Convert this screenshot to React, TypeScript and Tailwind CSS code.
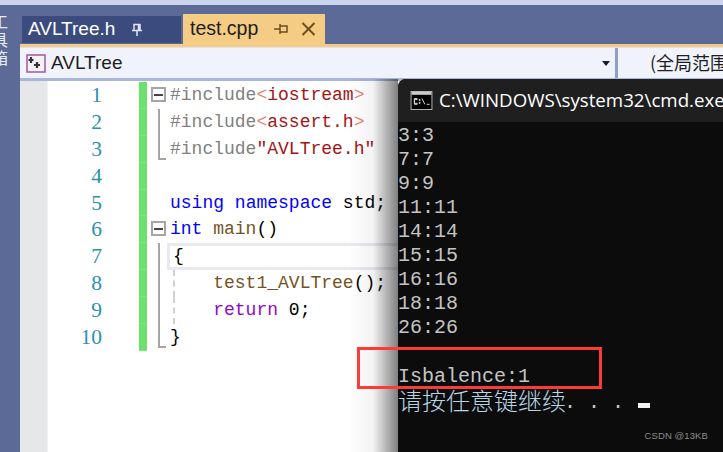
const mono = "font-['Liberation_Mono',monospace]";

type Seg = [string, string];
type Row = { n: number; fold?: 'box' | 'line' | 'foot'; cur?: boolean; guide?: boolean; segs: Seg[] };

const inc = 'text-[#808080]';
const str = 'text-[#a31515]';
const kw = 'text-[#0000ff]';
const fn = 'text-[#74531f]';
const ctl = 'text-[#8f08c4]';
const blk = 'text-black';

const rows: Row[] = [
  { n: 1, fold: 'box', segs: [[inc, '#include'], ['text-[#e8836f]', '<'], [str, 'iostream'], ['text-[#e8836f]', '>']] },
  { n: 2, fold: 'line', segs: [[inc, '#include'], ['text-[#e8836f]', '<'], [str, 'assert.h'], ['text-[#e8836f]', '>']] },
  { n: 3, fold: 'foot', segs: [[inc, '#include'], [str, '"AVLTree.h"']] },
  { n: 4, segs: [] },
  { n: 5, segs: [[kw, 'using'], [blk, ' '], [kw, 'namespace'], [blk, ' std;']] },
  { n: 6, fold: 'box', segs: [[kw, 'int'], [blk, ' '], [fn, 'main'], [blk, '()']] },
  { n: 7, fold: 'line', cur: true, segs: [[blk, '{']] },
  { n: 8, fold: 'line', guide: true, segs: [[blk, '    '], [fn, 'test1_AVLTree'], [blk, '();']] },
  { n: 9, fold: 'line', guide: true, segs: [[blk, '    '], [ctl, 'return'], [blk, ' 0;']] },
  { n: 10, fold: 'foot', segs: [[blk, '}']] },
];

const output = ['3:3', '7:7', '9:9', '11:11', '14:14', '15:15', '16:16', '18:18', '26:26', '\u00a0'];

function Fold({ kind }: { kind?: Row['fold'] }) {
  if (kind === 'box')
    return (
      <div className="w-[15px] h-[15px] mt-[5px] border-2 border-[#a5a5a5] bg-white flex items-center justify-center">
        <div className="w-[9px] h-[2px] bg-[#444]" />
      </div>
    );
  if (kind === 'line') return <div className="ml-[7px] w-[2px] h-full bg-[#a5a5a5]" />;
  if (kind === 'foot')
    return (
      <div className="ml-[7px] w-[8px] h-[24px] border-l-2 border-b-2 border-[#a5a5a5]" />
    );
  return null;
}

function CodeRow({ r }: { r: Row }) {
  return (
    <div className="flex h-[26.9px]">
      <div className="w-[55px] text-right text-[#2b91af] text-[21.5px] leading-[26.9px] font-['Liberation_Serif',serif] pr-[1px]">{r.n}</div>
      <div className="w-[36px]" />
      <div className="w-[8px] bg-[#6ce26c] border-b border-[#7fe67f]" />
      <div className="w-[4px]" />
      <div className="w-[18px] shrink-0"><Fold kind={r.fold} /></div>
      <div
        className={`relative flex-1 whitespace-pre text-[18px] leading-[26.9px] ${mono} pl-[1px] ${
          r.cur ? '-ml-[2px] pl-[3px] border-y-[3px] border-l-[3px] border-[#e9e8f3] !leading-[21px]' : ''
        }`}
      >
        {r.guide && <div className="absolute left-[4px] top-0 bottom-0 border-l-2 border-dashed border-[#d0d0d0]" />}
        {r.segs.map((s, i) => (
          <span key={i} className={s[0]}>{s[1]}</span>
        ))}
      </div>
    </div>
  );
}

export default function App() {
  return (
    <div className="relative w-[723px] h-[452px] overflow-hidden bg-[#5c6a97] flex flex-col font-['Liberation_Sans',sans-serif]">
      <div className="h-[5px] shrink-0 bg-[#ccd5ee]" />
      <div className="flex flex-1 min-h-0">
        {/* side rail */}
        <div className="w-[20px] shrink-0 overflow-hidden pt-[9px]">
          <div className="-ml-[9px] text-[16px] leading-[18px] tracking-[2px] text-[#e8ecf8] [writing-mode:vertical-rl] font-['Noto_Sans_CJK_SC',sans-serif]">工具箱</div>
        </div>
        <div className="flex-1 min-w-0 flex flex-col">
          {/* tabs */}
          <div className="h-[39px] shrink-0 flex items-end pl-[2px] gap-[2px]">
            <div className="w-[159px] h-[27px] mb-[1px] bg-[#3b4b7e] text-white flex items-center pl-[6px] text-[19px]">
              <span>AVLTree.h</span>
              <svg className="ml-[16px]" width="12" height="14" viewBox="0 0 12 14" fill="none" stroke="#dfe4f2" strokeWidth="1.5">
                <path d="M3 1.5h6v6H3zM1 7.5h10M6 8v5M7.5 2v5" />
              </svg>
            </div>
            <div className="w-[142px] h-[30px] bg-[#f5cc84] text-[#1e1e1e] flex items-center pl-[7px] text-[19.5px]">
              <span>test.cpp</span>
              <svg className="ml-[16px]" width="14" height="12" viewBox="0 0 14 12" fill="none" stroke="#6b4e1e" strokeWidth="1.5">
                <path d="M6 3h7v6H6zM6 1v10M0 6h6" />
              </svg>
              <svg className="ml-[13px]" width="15" height="14" viewBox="0 0 15 14" fill="none" stroke="#6b4e1e" strokeWidth="2">
                <path d="M1.5 1l12 12M13.5 1l-12 12" />
              </svg>
            </div>
          </div>
          <div className="h-[3px] shrink-0 bg-[#f5cc84]" />
          {/* nav bar */}
          <div className="h-[31px] shrink-0 flex bg-[#f0f3fc] border-t border-[#dbe2f5]">
            <div className="w-[595px] shrink-0 flex items-center pl-[6px] text-[19px] text-[#1e1e1e] relative">
              <svg width="20" height="19" viewBox="0 0 20 19">
                <rect x="1" y="1" width="18" height="17" fill="#f3f1f4" stroke="#a0589c" strokeWidth="1.5" />
                <path d="M5 3v6M2.5 6h5M11 8v6M8 11h6" stroke="#333" strokeWidth="2.2" fill="none" />
              </svg>
              <span className="ml-[5px]">AVLTree</span>
              <div className="absolute right-[5px] top-[13px] w-0 h-0 border-x-[4px] border-x-transparent border-t-[5px] border-t-[#1e1e1e]" />
            </div>
            <div className="w-[3px] bg-[#8f9fcb]" />
            <div className="flex-1 pl-[32px] text-[18px] leading-[28px] text-[#1e1e1e] whitespace-nowrap font-['Noto_Sans_CJK_SC',sans-serif] overflow-hidden">(全局范围</div>
          </div>
          <div className="h-[3px] shrink-0 bg-[#a9b6da]" />
          {/* editor */}
          <div className="flex-1 min-h-0 flex bg-white">
            <div className="w-[28px] shrink-0 bg-[#e6e7e9] border-r border-[#f3f3f4]" />
            <div className="flex-1 min-w-0 pt-[1px]">
              {rows.map((r) => (
                <CodeRow key={r.n} r={r} />
              ))}
            </div>
          </div>
        </div>
      </div>

      {/* console window */}
      <div className="absolute left-[398px] top-[79px] w-[340px] h-[373px] rounded-tl-[8px] bg-[#0c0c0c] flex flex-col">
        <div className="absolute -left-[50px] top-0 bottom-0 w-[50px] bg-gradient-to-r from-black/0 via-black/5 to-black/50" />
        <div className="h-[43px] shrink-0 bg-[#1f1f1f] rounded-tl-[8px] flex items-center pl-[12px] text-white text-[18.7px] whitespace-nowrap font-['Open_Sans',sans-serif]">
          <svg width="23" height="19" viewBox="0 0 23 20">
            <rect x="0.5" y="0.5" width="22" height="19" fill="#000" stroke="#bbb" />
            <rect x="1" y="1" width="21" height="3" fill="#ccc" />
            <path d="M4 8H7V9H4v4H7v1H4zM9 9h1v1H9zM9 12h1v1H9zM12 8l3 6M17 14h3" stroke="#ddd" fill="none" />
          </svg>
          <span className="ml-[6px]">C:\WINDOWS\system32\cmd.exe</span>
        </div>
        <div className={`pt-[2px] text-[#c4c4c4] text-[20px] leading-[24px] ${mono}`}>
          {output.map((l, i) => (
            <div key={i} className="h-[24px]">{l}</div>
          ))}
          <div className="h-[24px] pt-[2px] leading-[22px]">Isbalence:1</div>
          <div className="h-[24px] flex items-center whitespace-pre">
            <span className="text-[24px] leading-[24px] font-light font-['Noto_Sans_CJK_SC',sans-serif] text-[#b8d4e4]">请按任意键继续</span>
            <span className="-ml-[2px] mt-[6px] leading-[18px]">. . . </span>
            <span className="ml-[2px] w-[12px] h-[5px] mt-[11px] bg-[#f2f2f2]" />
          </div>
        </div>
        <div className="absolute right-[30px] bottom-[9px] text-[9.5px] tracking-[0.1px] text-[#8a8a8a]">CSDN @13KB</div>
      </div>

      {/* red annotation */}
      <div className="absolute left-[357px] top-[347px] w-[245px] h-[42px] border-[3px] border-[#fb3a3a]" />
    </div>
  );
}
